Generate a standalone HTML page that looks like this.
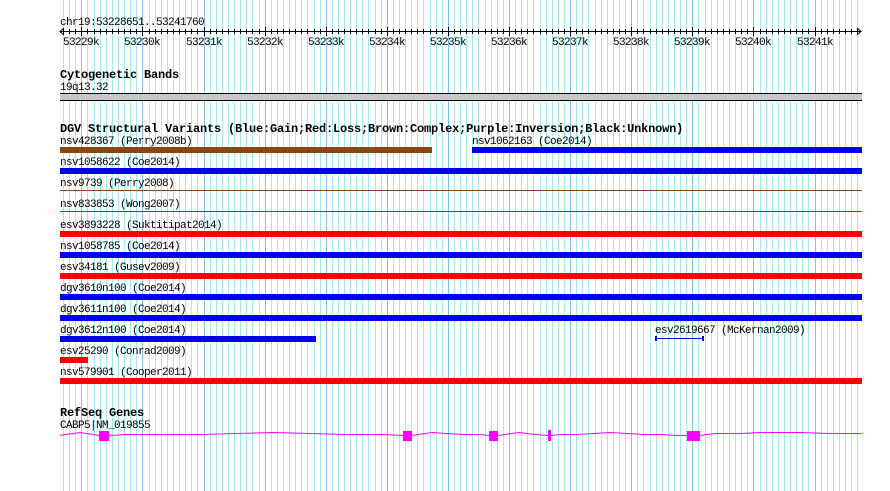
<!DOCTYPE html>
<html><head><meta charset="utf-8">
<style>
html,body{margin:0;padding:0;background:#fff;}
svg{display:block;}
text{font-family:"Liberation Mono","DejaVu Sans Mono",monospace;font-size:11px;letter-spacing:-0.6px;fill:#000;}
.b{font-weight:bold;font-size:12px;letter-spacing:-0.2px;}
</style></head><body>
<svg id="s" width="890" height="491" xmlns="http://www.w3.org/2000/svg">
<g id="grid"></g>
<g id="ticks"></g>
<text x="60" y="25">chr19:53228651..53241760</text>
<line x1="60" y1="31.5" x2="861" y2="31.5" stroke="#000"/>
<polyline points="64,28 60,31.5 64,35" fill="none" stroke="#000"/>
<polyline points="857,28 861,31.5 857,35" fill="none" stroke="#000"/>
<g id="lbl"></g>
<text class="b" x="60" y="78">Cytogenetic Bands</text>
<text x="60" y="90">19q13.32</text>
<rect x="60" y="93" width="802" height="8" fill="#000"/>
<rect x="60" y="94" width="802" height="6" fill="#c8c8c8"/>
<text class="b" x="60" y="132">DGV Structural Variants (Blue:Gain;Red:Loss;Brown:Complex;Purple:Inversion;Black:Unknown)</text>
<text x="60" y="144">nsv428367 (Perry2008b)</text>
<rect x="60" y="147" width="372" height="6" fill="#8b4513"/>
<text x="472" y="144">nsv1062163 (Coe2014)</text>
<rect x="472" y="147" width="390" height="6" fill="#0000ee"/>
<text x="60" y="165">nsv1058622 (Coe2014)</text>
<rect x="60" y="168" width="802" height="6" fill="#0000ee"/>
<text x="60" y="186">nsv9739 (Perry2008)</text>
<rect x="60" y="190" width="802" height="1" fill="#8b4513"/>
<text x="60" y="207">nsv833853 (Wong2007)</text>
<rect x="60" y="211" width="802" height="1" fill="#ff0000"/>
<text x="60" y="228">esv3893228 (Suktitipat2014)</text>
<rect x="60" y="231" width="802" height="6" fill="#ff0000"/>
<text x="60" y="249">nsv1058785 (Coe2014)</text>
<rect x="60" y="252" width="802" height="6" fill="#0000ee"/>
<text x="60" y="270">esv34181 (Gusev2009)</text>
<rect x="60" y="273" width="802" height="6" fill="#ff0000"/>
<text x="60" y="291">dgv3610n100 (Coe2014)</text>
<rect x="60" y="294" width="802" height="6" fill="#0000ee"/>
<text x="60" y="312">dgv3611n100 (Coe2014)</text>
<rect x="60" y="315" width="802" height="6" fill="#0000ee"/>
<text x="60" y="333">dgv3612n100 (Coe2014)</text>
<rect x="60" y="336" width="256" height="6" fill="#0000ee"/>
<text x="655" y="333">esv2619667 (McKernan2009)</text>
<rect x="656" y="338" width="47" height="1" fill="#0000ee"/>
<rect x="655" y="336" width="2" height="5" fill="#0000ee"/>
<rect x="702" y="336" width="2" height="5" fill="#0000ee"/>
<text x="60" y="354">esv25290 (Conrad2009)</text>
<rect x="60" y="357" width="28" height="6" fill="#ff0000"/>
<text x="60" y="375">nsv579901 (Cooper2011)</text>
<rect x="60" y="378" width="802" height="6" fill="#ff0000"/>
<text class="b" x="60" y="416">RefSeq Genes</text>
<text x="60" y="428">CABP5|NM_019855</text>
<polyline fill="none" stroke="#ff00ff" stroke-width="1" points="60,435.5 65,434.5 74,433.5 80,432.5 86,433.5 94,434.5 99,435.5 109,435.5 127,434.5 200,434.5 237,433.5 273,432.5 310,433.5 347,434.5 384,434.5 403,435.5 412,435.5 418,434.5 425,433.5 432,432.5 446,433.5 465,434.5 480,434.5 489,435.5 498,435.5 505,434.5 512,433.5 519,432.5 527,433.5 535,434.5 548,435.5 551,435.5 560,434.5 576,434.5 593,433.5 610,432.5 627,433.5 644,434.5 661,434.5 678,435.5 700,435.5 707,434.5 716,433.5 740,433.5 760,432.5 800,432.5 830,433.5 861,433.5"/>
<rect x="99" y="431" width="10" height="10" fill="#ff00ff"/>
<rect x="403" y="431" width="9" height="10" fill="#ff00ff"/>
<rect x="489" y="431" width="9" height="10" fill="#ff00ff"/>
<rect x="548" y="430" width="3" height="11" fill="#ff00ff"/>
<rect x="687" y="431" width="13" height="10" fill="#ff00ff"/>
</svg>
<script>
var NS="http://www.w3.org/2000/svg";
var g=document.getElementById("grid"),t=document.getElementById("ticks"),l=document.getElementById("lbl");
function X(p){return 60+(p-53228651)*0.0611;}
for(var p=53228700;p<=53241700;p+=100){
  var x=Math.round(X(p));
  var major=(p%1000===0);
  var r=document.createElementNS(NS,"rect");
  r.setAttribute("x",x);r.setAttribute("y",0);r.setAttribute("width",1);r.setAttribute("height",491);
  r.setAttribute("fill",major?"#7cc4ec":"#a4ecec");
  g.appendChild(r);
  var k=document.createElementNS(NS,"rect");
  k.setAttribute("x",x);k.setAttribute("y",major?27:29);k.setAttribute("width",1);k.setAttribute("height",major?9:5);
  k.setAttribute("fill","#000");t.appendChild(k);
  if(major){
    var tx=document.createElementNS(NS,"text");
    tx.setAttribute("x",x);tx.setAttribute("y",45);tx.setAttribute("text-anchor","middle");
    tx.textContent=(p/1000)+"k";l.appendChild(tx);
  }
}
</script>
</body></html>
